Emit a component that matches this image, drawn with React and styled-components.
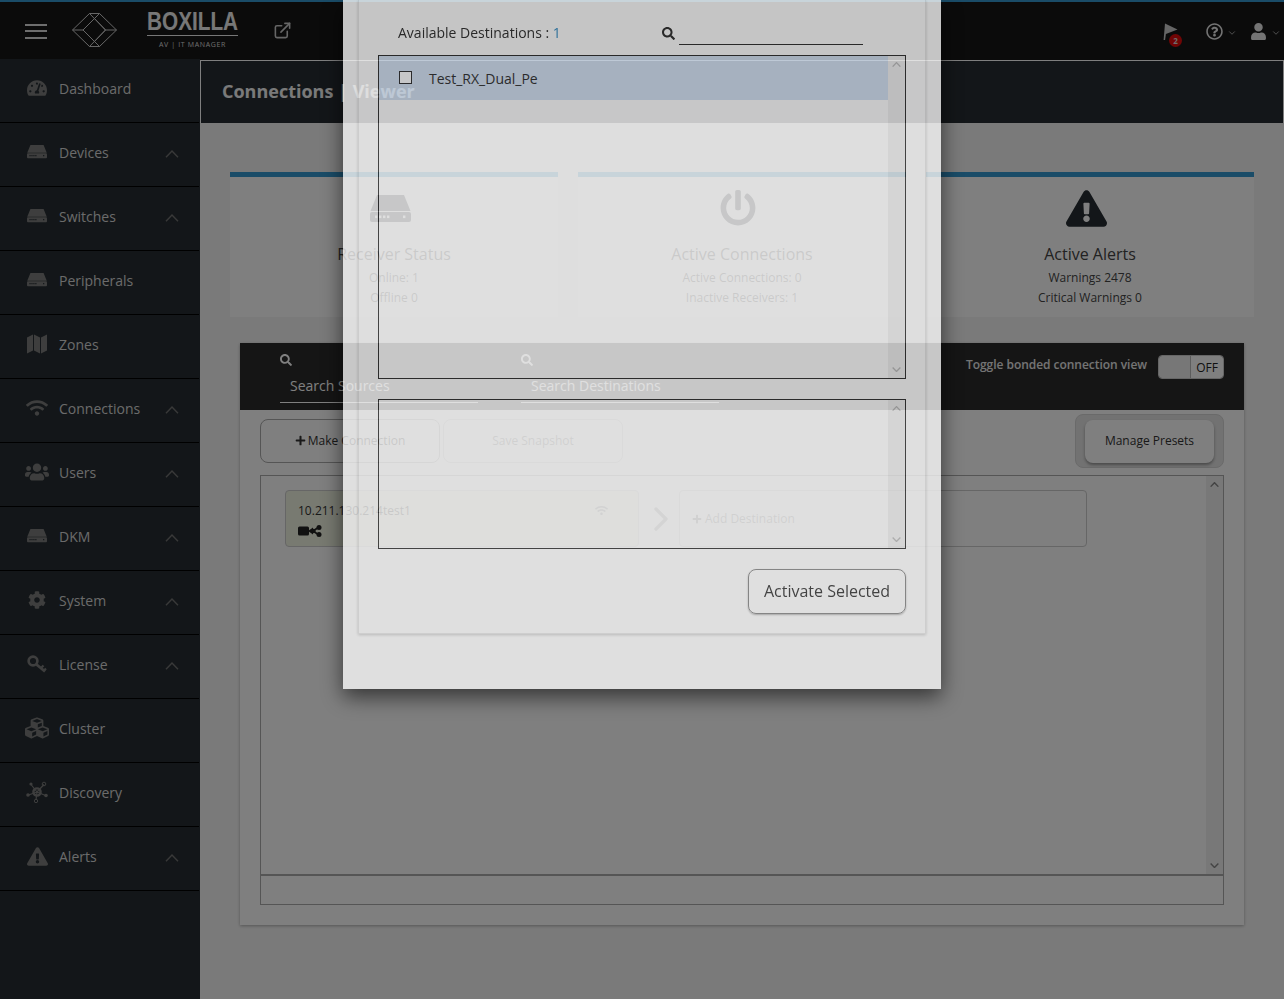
import React from 'react';
import styled, { createGlobalStyle } from 'styled-components';
import {
  FaTachometerAlt,
  FaWifi,
  FaUsers,
  FaCog,
  FaCubes,
  FaExclamationTriangle,
  FaRegQuestionCircle,
  FaUser,
  FaSearch,
  FaPlus,
  FaPowerOff,
} from 'react-icons/fa';
import { FiExternalLink, FiChevronDown, FiChevronRight } from 'react-icons/fi';

const GlobalStyle = createGlobalStyle`
  html, body {
    margin: 0;
    height: 999px;
    overflow: hidden;
    background: #f5f5f5;
    font-family: "Open Sans", "Liberation Sans", sans-serif;
    color: #333;
  }
  * { box-sizing: border-box; }
`;

const Page = styled.div`
  position: relative;
  width: 1284px;
  height: 999px;
  overflow: hidden;
`;

/* top bar */
const Header = styled.header`
  display: flex;
  align-items: center;
  height: 60px;
  border-top: 2px solid #3599d0;
  background: #171717;
  color: #fff;
`;

const Burger = styled.div`
  display: flex;
  flex-direction: column;
  gap: 4.5px;
  width: 22px;
  margin-left: 25px;
  margin-right: 25px;
  span {
    height: 2px;
    background: #fff;
    opacity: 0.85;
  }
`;

const LogoMark = styled.svg`
  width: 45px;
  height: 34px;
  margin-top: -2px;
  fill: none;
  stroke: #ccc;
  stroke-width: 1;
`;

const LogoText = styled.div`
  width: 91px;
  margin-left: 30px;
  margin-top: -3px;
`;

const LogoName = styled.div`
  height: 25px;
  border-bottom: 1px solid #eee;
  font-family: "Liberation Sans", sans-serif;
  font-weight: 700;
  font-size: 25px;
  line-height: 20px;
  white-space: nowrap;
  color: #eee;
  span {
    display: inline-block;
    transform: scaleX(0.83);
    transform-origin: left center;
  }
`;

const LogoSub = styled.div`
  margin-top: 5px;
  text-align: center;
  font-size: 7px;
  line-height: 8px;
  letter-spacing: 0.65px;
  white-space: nowrap;
  color: #ddd;
`;

const ExternalIcon = styled(FiExternalLink)`
  width: 19px;
  height: 19px;
  margin-left: 35px;
  margin-top: -1px;
  color: #ccc;
`;

const HeaderRight = styled.div`
  display: flex;
  align-items: center;
  margin-left: auto;
  margin-right: 3px;
  margin-top: 1px;
`;

const FlagWrap = styled.div`
  position: relative;
  width: 18px;
  height: 18px;
  margin-right: 25px;
  svg {
    display: block;
  }
`;

const Badge = styled.span`
  position: absolute;
  top: 11px;
  left: 6px;
  width: 13px;
  height: 13px;
  border-radius: 50%;
  background: #e00a0a;
  color: #ddd;
  font-size: 8px;
  font-weight: 700;
  line-height: 13px;
  text-align: center;
`;

const HeadChevron = styled(FiChevronDown)`
  width: 10px;
  height: 10px;
  margin: 3px 0 0 4px;
  color: #bbb;
`;

const HeadGroup = styled.div`
  display: flex;
  align-items: center;
  margin-left: ${(p) => p.$gap || 0}px;
  color: #e8e8e8;
`;

/* layout under the bar */
const Body = styled.div`
  display: flex;
  align-items: flex-start;
`;

const Sidebar = styled.nav`
  position: relative;
  flex: 0 0 200px;
  height: 940px;
  margin-top: -1px;
  background: #262d32;
`;

const NavItem = styled.div`
  display: flex;
  align-items: center;
  width: 199px;
  height: 64px;
  padding: 0 20px 5px 25px;
  border-bottom: 1px solid #000;
  font-size: 14px;
  color: #d6d6d6;
`;

const NavIcon = styled.span`
  display: flex;
  justify-content: center;
  align-items: center;
  flex: 0 0 24px;
  margin-right: 10px;
  color: #7c7c7c;
`;

const ArrowSvg = styled.svg`
  display: block;
  fill: none;
  stroke: ${(p) => p.$color};
  stroke-width: ${(p) => p.$stroke}px;
`;

const NavChevron = styled.span`
  margin-left: auto;
  margin-top: 3px;
`;

const Main = styled.main`
  flex: 1;
  min-width: 0;
`;

const TitleBar = styled.div`
  display: flex;
  align-items: center;
  height: 63px;
  padding: 0 0 3px 21px;
  border: 1px solid #fff;
  border-bottom: 0;
  background: #262d32;
  color: #f5f5f5;
  font-size: 18px;
  font-weight: 700;
`;

const Content = styled.div`
  padding: 49px 30px 0;
`;

/* stat cards */
const Stats = styled.div`
  display: grid;
  grid-template-columns: repeat(3, 328px);
  gap: 20px;
`;

const StatCard = styled.div`
  height: 145px;
  border-top: 5px solid #3599d0;
  background: #fff;
  color: #444;
  text-align: center;
`;

const StatIcon = styled.div`
  display: flex;
  justify-content: center;
  align-items: center;
  height: 36px;
  margin: 13px 8px 0 0;
  color: #262d32;
`;

const StatTitle = styled.div`
  margin: 17px 0 3px;
  font-size: 16px;
  line-height: 22px;
`;

const StatLine = styled.div`
  font-size: 12px;
  line-height: 20px;
`;

/* connections panel */
const Panel = styled.section`
  height: 582px;
  margin: 26px 10px 0;
  background: #fff;
  box-shadow: 0 1px 3px rgba(0, 0, 0, 0.3);
`;

const PanelBar = styled.div`
  display: flex;
  height: 67px;
  padding-left: 40px;
  background: #2a2a2a;
`;

const SearchBlock = styled.div`
  width: 198px;
  margin-right: 43px;
  padding-top: 11px;
  color: #fff;
`;

const SearchIcon = styled(FaSearch)`
  display: block;
  width: 12px;
  height: 12px;
  margin-bottom: 3px;
`;

const SearchField = styled.input`
  display: block;
  width: 100%;
  height: 34px;
  padding: 0 0 1px 10px;
  border: 0;
  border-bottom: 1px solid #fff;
  background: transparent;
  color: #fff;
  font-family: inherit;
  font-size: 14px;
  &::placeholder {
    color: #fff;
    opacity: 1;
  }
`;

const ToggleGroup = styled.div`
  display: flex;
  align-items: flex-start;
  margin-left: auto;
  margin-right: 20px;
  padding-top: 12px;
`;

const ToggleLabel = styled.span`
  margin: 1px 11px 0 0;
  color: #e8e8e8;
  font-size: 12px;
  font-weight: 600;
  line-height: 18px;
  letter-spacing: -0.04px;
`;

const Toggle = styled.div`
  display: flex;
  width: 66px;
  height: 24px;
  overflow: hidden;
  border: 1px solid #ccc;
  border-radius: 4px;
`;

const ToggleOff = styled.span`
  flex: 1;
  background: #eee;
`;

const ToggleOn = styled.span`
  width: 33px;
  border-left: 1px solid #bbb;
  background: #fff;
  color: #222;
  font-size: 12px;
  line-height: 24px;
  text-align: center;
`;

const ActionRow = styled.div`
  display: flex;
  align-items: center;
  height: 54px;
  margin: 4px 20px 7px;
  gap: 3px;
`;

const ActionButton = styled.button`
  width: 180px;
  height: 44px;
  padding: 0 0 2px;
  border: 1px solid ${(p) => (p.disabled ? '#ccc' : '#aaa')};
  border-radius: 8px;
  background: transparent;
  color: ${(p) => (p.disabled ? '#777' : '#333')};
  font-family: inherit;
  font-size: 12px;
  svg {
    width: 11px;
    height: 11px;
    margin-right: 2px;
    vertical-align: -1px;
  }
`;

const PresetWrap = styled.div`
  display: flex;
  justify-content: center;
  align-items: center;
  width: 149px;
  height: 54px;
  margin-left: auto;
  border: 1px solid #d5d5d5;
  border-radius: 8px;
  background: #e4e4e4;
`;

const PresetButton = styled.button`
  width: 129px;
  height: 43px;
  padding: 0 0 2px;
  border: 0;
  border-radius: 8px;
  background: #fff;
  box-shadow: 0 2px 3px rgba(0, 0, 0, 0.35);
  color: #333;
  font-family: inherit;
  font-size: 12px;
`;

const ConnectionList = styled.div`
  display: flex;
  justify-content: space-between;
  height: 401px;
  margin: 0 20px;
  border: 1px solid #aaa;
  border-bottom-width: 2px;
`;

const ConnectionRow = styled.div`
  display: flex;
  align-items: center;
  height: 57px;
  margin: 14px 0 0 24px;
`;

const SourceCard = styled.div`
  position: relative;
  width: 354px;
  height: 57px;
  padding: 11px 12px;
  border: 1px solid #ccc;
  border-radius: 4px;
  background: #f0f4e2;
  color: #333;
  font-size: 12px;
  line-height: 17px;
`;

const SourceWifi = styled(FaWifi)`
  position: absolute;
  top: 13px;
  right: 30px;
  width: 13px;
  height: 13px;
  color: #888;
`;

const SourceGlyph = styled.svg`
  display: block;
  width: 24px;
  height: 12px;
  margin-top: 6px;
  color: #222;
`;

const RowArrow = styled(FiChevronRight)`
  flex: 0 0 40px;
  width: 40px;
  height: 40px;
  margin: 0 -2px 0 2px;
  color: #999;
`;

const DestCard = styled.div`
  display: flex;
  align-items: center;
  width: 408px;
  height: 57px;
  padding-left: 12px;
  border: 1px solid #ccc;
  border-radius: 4px;
  color: #777;
  font-size: 12px;
  svg {
    width: 10px;
    height: 10px;
    margin-right: 3px;
  }
`;

const Scrollbar = styled.div`
  display: flex;
  flex-direction: column;
  justify-content: space-between;
  align-items: center;
  flex: 0 0 17px;
  padding: 6px 0;
  background: ${(p) => p.$bg || '#f1f1f1'};
`;

const FooterBox = styled.div`
  height: 29px;
  margin: 0 20px;
  border: 1px solid #aaa;
  border-top: 0;
`;

/* dimming layer and dialog */
const Backdrop = styled.div`
  position: absolute;
  inset: 0;
  background: rgba(0, 0, 0, 0.5);
`;

const Modal = styled.div`
  position: absolute;
  top: 0;
  left: 343px;
  width: 598px;
  height: 689px;
  padding: 0 15px;
  background: #fcfcfc;
  box-shadow: 0 8px 20px rgba(0, 0, 0, 0.75);
  opacity: 0.78;
`;

const ModalCard = styled.div`
  height: 634px;
  padding: 0 19px;
  border: 1px solid #e6e6e6;
  border-top: 0;
  box-shadow: 0 1px 3px rgba(0, 0, 0, 0.2);
`;

const ModalHead = styled.div`
  display: flex;
  height: 55px;
  padding: 23px 0 0 20px;
  font-size: 14px;
  line-height: 19px;
`;

const ModalLabel = styled.span`
  flex: 0 0 264px;
  color: #333;
  em {
    color: #3a8fc4;
    font-style: normal;
  }
`;

const ModalSearchIcon = styled(FaSearch)`
  width: 13px;
  height: 13px;
  margin: 4px 4px 0 0;
  color: #333;
`;

const ModalInput = styled.input`
  width: 184px;
  height: 22px;
  border: 0;
  border-bottom: 1px solid #333;
  background: transparent;
  font-family: inherit;
`;

const PickList = styled.div`
  display: flex;
  justify-content: space-between;
  height: ${(p) => p.$height}px;
  margin-bottom: 20px;
  border: 1px solid #333;
`;

const PickRows = styled.div`
  flex: 1;
`;

const PickRow = styled.div`
  display: flex;
  align-items: center;
  height: 44px;
  padding-left: 20px;
  background: #d1dff0;
  color: #333;
  font-size: 14px;
`;

const CheckBox = styled.span`
  flex: 0 0 13px;
  height: 13px;
  margin: -2px 17px 0 0;
  border: 1px solid #333;
  background: #fcfcfc;
`;

const ModalFoot = styled.div`
  display: flex;
  justify-content: flex-end;
`;

const ActivateButton = styled.button`
  width: 158px;
  height: 45px;
  padding: 0 0 2px;
  border: 1px solid #888;
  border-radius: 8px;
  background: transparent;
  box-shadow: 0 1px 2px rgba(0, 0, 0, 0.3);
  color: #333;
  font-family: inherit;
  font-size: 16px;
`;

function Arrow({ up = true, size = 14, color = '#777', stroke = 1.4 }) {
  return (
    <ArrowSvg
      viewBox="0 0 14 8"
      width={size}
      height={(size * 8) / 14}
      $color={color}
      $stroke={stroke}
    >
      <path d={up ? 'M1 7.2 L7 1 L13 7.2' : 'M1 .8 L7 7 L13 .8'} />
    </ArrowSvg>
  );
}

function DeviceIcon({ width, dots }) {
  return (
    <svg viewBox="0 0 41 27" width={width} height={(width * 27) / 41} fill="currentColor">
      <path d="M7 0 H34 L40.5 16 H.5 Z" />
      <rect x="0" y="17" width="41" height="10" rx="2" />
      {[5, 9, 13, 17, 33].map((x) => (
        <rect key={x} x={x} y="20.5" width="2.4" height="2.6" fill={dots} />
      ))}
    </svg>
  );
}

function MapIcon() {
  return (
    <svg viewBox="0 0 20 20" width="20" height="20" fill="currentColor">
      <path d="M0 3.5 L6 .5 V16.5 L0 19.5 Z" />
      <path d="M7 .5 L13 3.5 V19.5 L7 16.5 Z" />
      <path d="M14 3.5 L20 .5 V16.5 L14 19.5 Z" />
    </svg>
  );
}

function LicenseKeyIcon() {
  return (
    <svg viewBox="0 0 20 18" width="20" height="18" fill="none" stroke="currentColor">
      <circle cx="6" cy="6" r="4.4" strokeWidth="2.6" />
      <path d="M9.5 9.5 L18 16.5" strokeWidth="2.8" />
      <path d="M14 13 L16.5 10.5 M17 15.5 L19 13.5" strokeWidth="2.2" />
    </svg>
  );
}

function DiscoveryIcon() {
  return (
    <svg viewBox="0 0 22 22" width="22" height="22" fill="currentColor" stroke="currentColor">
      <g strokeWidth="1.2">
        <path d="M11 11 L5 3.5 M11 11 L18 3.5 M11 11 L2.5 14 M11 11 L19.5 14.5 M11 11 L10 19" />
      </g>
      <circle cx="11" cy="11" r="3.6" fill="none" strokeWidth="2.4" />
      <circle cx="5" cy="3" r="1.6" strokeWidth="0" />
      <circle cx="18" cy="3" r="1.8" fill="none" strokeWidth="1" />
      <circle cx="2" cy="14" r="1.8" strokeWidth="0" />
      <circle cx="20" cy="14.5" r="1.8" strokeWidth="0" />
      <circle cx="10" cy="20" r="1.7" fill="none" strokeWidth="1" />
    </svg>
  );
}

const navItems = [
  { label: 'Dashboard', icon: <FaTachometerAlt size={20} /> },
  { label: 'Devices', icon: <DeviceIcon width={20} dots="#262d32" />, more: true },
  { label: 'Switches', icon: <DeviceIcon width={20} dots="#262d32" />, more: true },
  { label: 'Peripherals', icon: <DeviceIcon width={20} dots="#262d32" /> },
  { label: 'Zones', icon: <MapIcon /> },
  { label: 'Connections', icon: <FaWifi size={22} />, more: true },
  { label: 'Users', icon: <FaUsers size={24} />, more: true },
  { label: 'DKM', icon: <DeviceIcon width={20} dots="#262d32" />, more: true },
  { label: 'System', icon: <FaCog size={18} />, more: true },
  { label: 'License', icon: <LicenseKeyIcon />, more: true },
  { label: 'Cluster', icon: <FaCubes size={24} /> },
  { label: 'Discovery', icon: <DiscoveryIcon /> },
  { label: 'Alerts', icon: <FaExclamationTriangle size={21} />, more: true },
];

const stats = [
  {
    title: 'Receiver Status',
    icon: <DeviceIcon width={41} dots="#fff" />,
    lines: ['Online: 1', 'Offline 0'],
  },
  {
    title: 'Active Connections',
    icon: <FaPowerOff size={36} />,
    lines: ['Active Connections: 0', 'Inactive Receivers: 1'],
  },
  {
    title: 'Active Alerts',
    icon: <FaExclamationTriangle size={41} />,
    lines: ['Warnings 2478', 'Critical Warnings 0'],
  },
];

function App() {
  return (
    <Page>
      <GlobalStyle />
      <Header>
        <Burger>
          <span />
          <span />
          <span />
        </Burger>
        <LogoMark viewBox="0 0 45 34">
          <path d="M17.5 .5 H27.5 L44.5 17 L27.5 33.5 H17.5 L.5 17 Z" />
          <path d="M11 17 L22.5 5.5 L33.5 17 L22.5 28.5 Z" />
          <path d="M17.5 .5 L33.5 17 L17.5 33.5 M27.5 .5 L11 17 L27.5 33.5 M.5 17 H11 M33.5 17 H44.5" />
        </LogoMark>
        <LogoText>
          <LogoName>
            <span>BOXILLA</span>
          </LogoName>
          <LogoSub>AV | IT MANAGER</LogoSub>
        </LogoText>
        <ExternalIcon />
        <HeaderRight>
          <FlagWrap>
            <svg viewBox="0 0 15 17" width="15" height="17" fill="#ccc">
              <path d="M2 .5 L14.5 6.5 L2.9 11 L2.1 17 L.6 17 Z" />
            </svg>
            <Badge>2</Badge>
          </FlagWrap>
          <HeadGroup>
            <FaRegQuestionCircle size={17} />
            <HeadChevron />
          </HeadGroup>
          <HeadGroup $gap={13}>
            <FaUser size={17} />
            <HeadChevron />
          </HeadGroup>
        </HeaderRight>
      </Header>

      <Body>
        <Sidebar>
          {navItems.map((item) => (
            <NavItem key={item.label}>
              <NavIcon>{item.icon}</NavIcon>
              {item.label}
              {item.more && (
                <NavChevron>
                  <Arrow color="#727272" />
                </NavChevron>
              )}
            </NavItem>
          ))}
        </Sidebar>

        <Main>
          <TitleBar>Connections | Viewer</TitleBar>
          <Content>
            <Stats>
              {stats.map((stat) => (
                <StatCard key={stat.title}>
                  <StatIcon>{stat.icon}</StatIcon>
                  <StatTitle>{stat.title}</StatTitle>
                  {stat.lines.map((line) => (
                    <StatLine key={line}>{line}</StatLine>
                  ))}
                </StatCard>
              ))}
            </Stats>

            <Panel>
              <PanelBar>
                <SearchBlock>
                  <SearchIcon />
                  <SearchField placeholder="Search Sources" />
                </SearchBlock>
                <SearchBlock>
                  <SearchIcon />
                  <SearchField placeholder="Search Destinations" />
                </SearchBlock>
                <ToggleGroup>
                  <ToggleLabel>Toggle bonded connection view</ToggleLabel>
                  <Toggle>
                    <ToggleOff />
                    <ToggleOn>OFF</ToggleOn>
                  </Toggle>
                </ToggleGroup>
              </PanelBar>

              <ActionRow>
                <ActionButton>
                  <FaPlus />
                  Make Connection
                </ActionButton>
                <ActionButton disabled>Save Snapshot</ActionButton>
                <PresetWrap>
                  <PresetButton>Manage Presets</PresetButton>
                </PresetWrap>
              </ActionRow>

              <ConnectionList>
                <ConnectionRow>
                  <SourceCard>
                    10.211.130.214test1
                    <SourceWifi />
                    <SourceGlyph viewBox="0 0 24 12" fill="currentColor">
                      <rect x="0" y="1.5" width="11" height="9" rx="1.5" />
                      <path d="M10 6 L15 2.5 V9.5 Z" />
                      <path d="M15 6 L21 2 M15 6 L21 10" stroke="currentColor" strokeWidth="1.6" />
                      <circle cx="15.5" cy="6" r="2.2" />
                      <circle cx="21" cy="2.6" r="2.5" />
                      <circle cx="21" cy="9.4" r="2.5" />
                    </SourceGlyph>
                  </SourceCard>
                  <RowArrow />
                  <DestCard>
                    <FaPlus />
                    Add Destination
                  </DestCard>
                </ConnectionRow>
                <Scrollbar>
                  <Arrow size={9} stroke={2.2} color="#888" />
                  <Arrow up={false} size={9} stroke={2.2} color="#888" />
                </Scrollbar>
              </ConnectionList>
              <FooterBox />
            </Panel>
          </Content>
        </Main>
      </Body>

      <Backdrop />

      <Modal>
        <ModalCard>
          <ModalHead>
            <ModalLabel>
              Available Destinations : <em>1</em>
            </ModalLabel>
            <ModalSearchIcon />
            <ModalInput />
          </ModalHead>
          <PickList $height={324}>
            <PickRows>
              <PickRow>
                <CheckBox />
                Test_RX_Dual_Pe
              </PickRow>
            </PickRows>
            <Scrollbar $bg="#eee">
              <Arrow size={9} stroke={2} color="#bbb" />
              <Arrow up={false} size={9} stroke={2} color="#bbb" />
            </Scrollbar>
          </PickList>
          <PickList $height={150}>
            <PickRows />
            <Scrollbar $bg="#eee">
              <Arrow size={9} stroke={2} color="#bbb" />
              <Arrow up={false} size={9} stroke={2} color="#bbb" />
            </Scrollbar>
          </PickList>
          <ModalFoot>
            <ActivateButton>Activate Selected</ActivateButton>
          </ModalFoot>
        </ModalCard>
      </Modal>
    </Page>
  );
}

export default App;
